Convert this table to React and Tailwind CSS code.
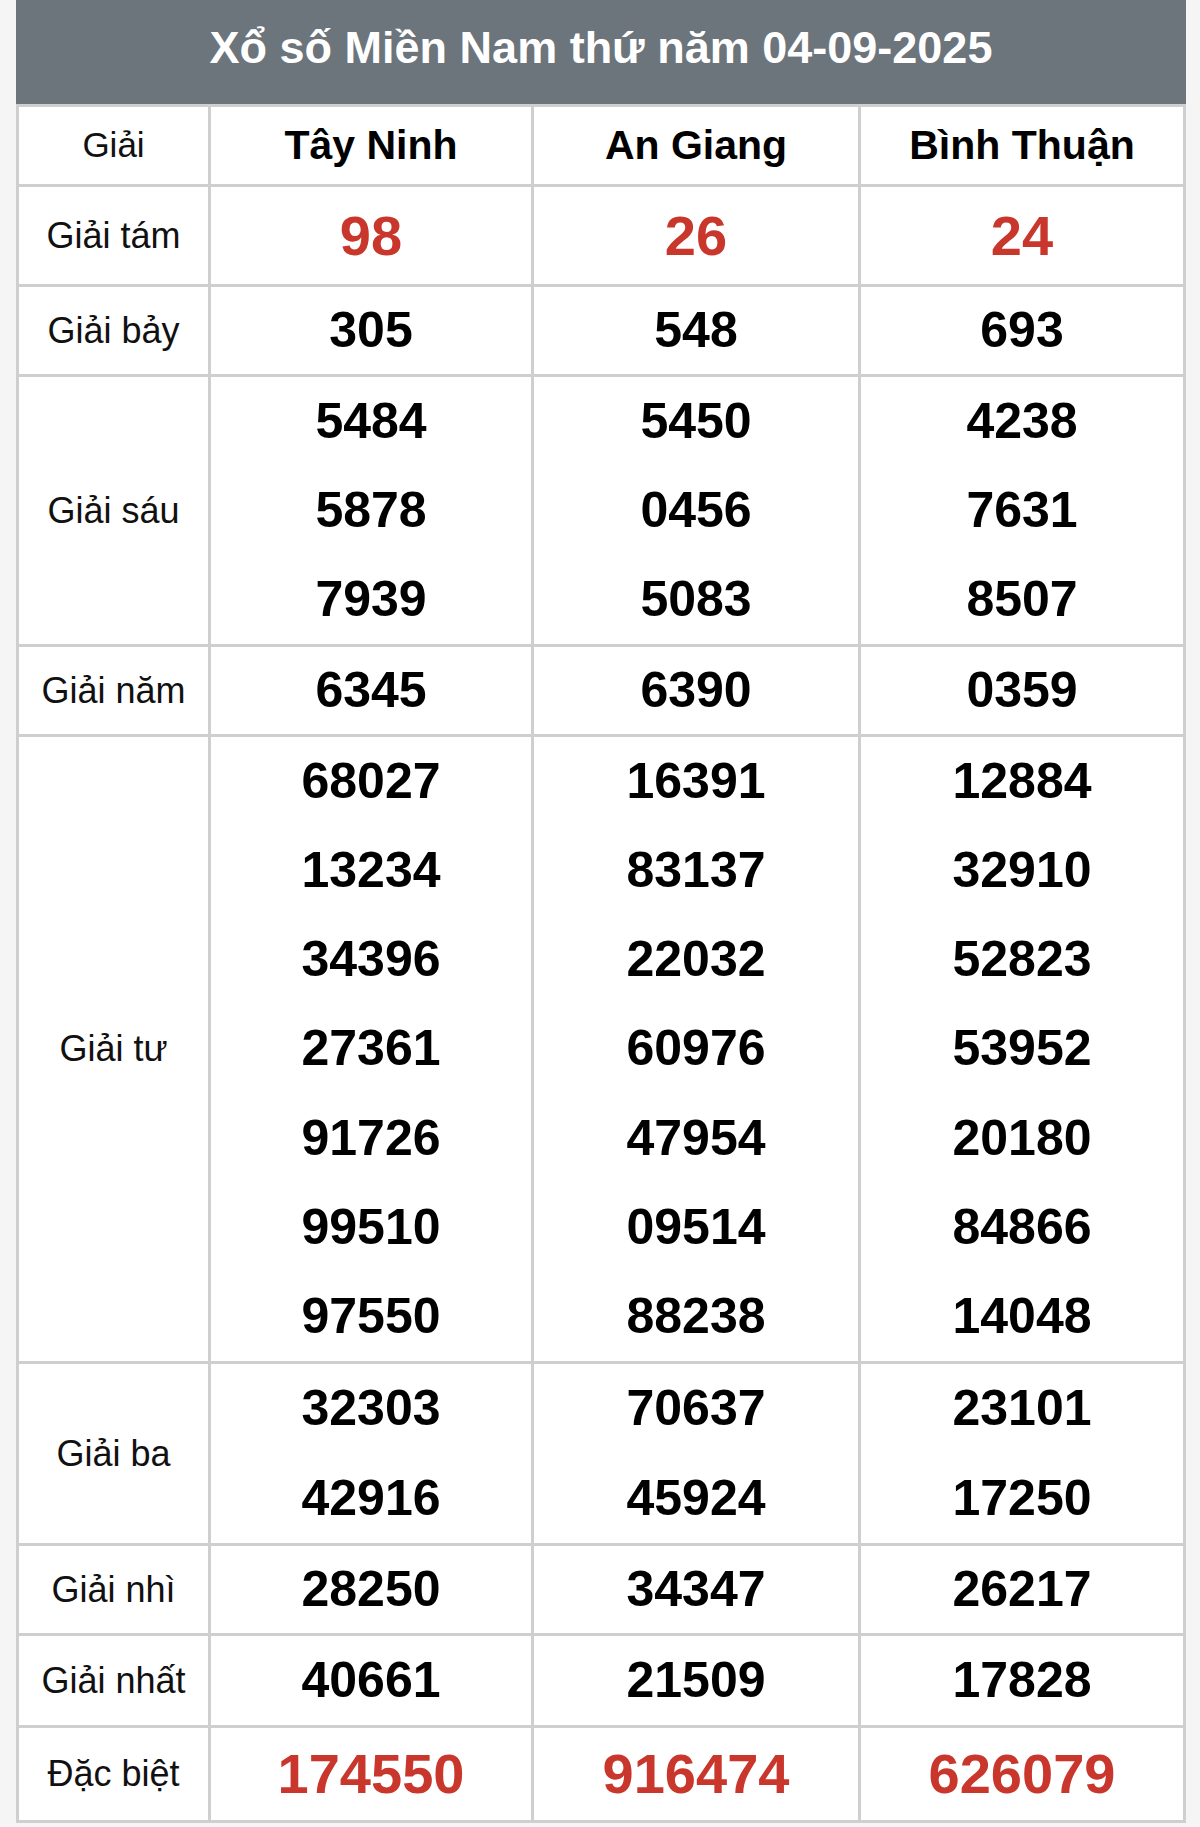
import React from 'react';

const provinces = ['Tây Ninh', 'An Giang', 'Bình Thuận'];

const prizes = [
  { label: 'Giải tám', h: 'h-[100px]', red: true, values: [['98'], ['26'], ['24']] },
  { label: 'Giải bảy', h: 'h-[90px]', values: [['305'], ['548'], ['693']] },
  {
    label: 'Giải sáu',
    h: 'h-[270px]',
    values: [
      ['5484', '5878', '7939'],
      ['5450', '0456', '5083'],
      ['4238', '7631', '8507'],
    ],
  },
  { label: 'Giải năm', h: 'h-[90px]', values: [['6345'], ['6390'], ['0359']] },
  {
    label: 'Giải tư',
    h: 'h-[627px]',
    values: [
      ['68027', '13234', '34396', '27361', '91726', '99510', '97550'],
      ['16391', '83137', '22032', '60976', '47954', '09514', '88238'],
      ['12884', '32910', '52823', '53952', '20180', '84866', '14048'],
    ],
  },
  {
    label: 'Giải ba',
    h: 'h-[182px]',
    values: [
      ['32303', '42916'],
      ['70637', '45924'],
      ['23101', '17250'],
    ],
  },
  { label: 'Giải nhì', h: 'h-[90px]', values: [['28250'], ['34347'], ['26217']] },
  { label: 'Giải nhất', h: 'h-[92px]', values: [['40661'], ['21509'], ['17828']] },
  { label: 'Đặc biệt', h: 'h-[95px]', red: true, values: [['174550'], ['916474'], ['626079']] },
];

// column widths, kept in one place so header and body line up
const colClass = [
  'w-[192px] border-r-[3px]',
  'w-[323px] border-r-[3px]',
  'w-[327px] border-r-[3px]',
  'flex-1',
];

const App = () => {
  return (
    <div className="min-h-[1827px] bg-[#f5f5f5] font-['Liberation_Sans',Arial,sans-serif]">
      <div className="mx-[16px] w-[1170px] bg-white border-x-[3px] border-[#cfcfcf]">
        {/* Title */}
        <div className="-mx-[3px] h-[104px] bg-[#6c747c] flex items-center justify-center">
          <h1 className="text-white font-bold text-[45px] leading-none pb-[10px]">
            Xổ số Miền Nam thứ năm 04-09-2025
          </h1>
        </div>

        {/* Header row */}
        <div className="flex h-[83px] border-y-[3px] border-[#cfcfcf]">
          <div className={`${colClass[0]} border-[#cfcfcf] flex items-center justify-center text-[35px] text-[#111]`}>
            Giải
          </div>
          {provinces.map((p, i) => (
            <div
              key={p}
              className={`${colClass[i + 1]} border-[#cfcfcf] flex items-center justify-center text-[41px] font-bold text-black`}
            >
              {p}
            </div>
          ))}
        </div>

        {/* Prize rows */}
        {prizes.map((row) => (
          <div key={row.label} className={`flex ${row.h} border-b-[3px] border-[#cfcfcf]`}>
            <div className={`${colClass[0]} border-[#cfcfcf] flex items-center justify-center text-[36px] text-[#111]`}>
              {row.label}
            </div>
            {row.values.map((nums, i) => (
              <div key={i} className={`${colClass[i + 1]} border-[#cfcfcf] flex flex-col justify-center`}>
                {nums.map((n, idx) => (
                  <div
                    key={idx}
                    className={
                      row.red
                        ? 'flex-1 flex items-center justify-center font-bold text-[56px] text-[#c9372c]'
                        : 'flex-1 flex items-center justify-center font-bold text-[50px] text-black'
                    }
                  >
                    {n}
                  </div>
                ))}
              </div>
            ))}
          </div>
        ))}
      </div>
    </div>
  );
};

export default App;
